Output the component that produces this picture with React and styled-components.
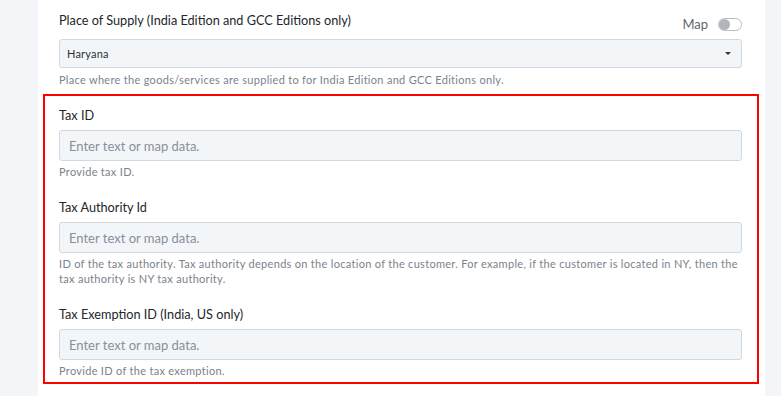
import React from 'react';
import styled, { createGlobalStyle } from 'styled-components';

const GlobalStyle = createGlobalStyle`
	html, body {
		margin: 0;
		padding: 0;
		background: #f3f5f8;
		font-family: Lato, 'Open Sans', sans-serif;
	}
`;

const Page = styled.div`
	display: flex;
	height: 396px;
	overflow: hidden;
`;

const Gutter = styled.div`
	width: ${(p) => p.width}px;
	flex-shrink: 0;
	background: #f3f5f8;
`;

const Panel = styled.div`
	flex: 1;
	background: #ffffff;
	padding: 0 6px 0 5px;
`;

const Section = styled.div`
	padding: ${(p) => (p.highlight ? '10px 15px 4px 14px' : '11px 17px 7px 16px')};
	border: ${(p) => (p.highlight ? '2px solid #ff0000' : 'none')};
`;

const Field = styled.div`
	display: flex;
	flex-direction: column;
	margin-bottom: ${(p) => (p.last ? 0 : 19)}px;
`;

const LabelRow = styled.div`
	display: flex;
	align-items: center;
	justify-content: space-between;
	height: 18px;
`;

const Label = styled.label`
	font-size: 12.7px;
	line-height: 18px;
	color: #22262b;
`;

const MapToggle = styled.div`
	display: flex;
	align-items: center;
	gap: 10px;
	font-size: 13px;
	color: #5f6670;
	margin-top: 8px;
`;

const Switch = styled.span`
	position: relative;
	width: 22px;
	height: 11px;
	border: 1px solid #b9bec5;
	border-radius: 7px;
	background: #ffffff;

	&::after {
		content: '';
		position: absolute;
		left: 0;
		top: 0;
		width: 11px;
		height: 11px;
		border-radius: 50%;
		background: #b1b6bd;
	}
`;

const Input = styled.input`
	box-sizing: border-box;
	width: 100%;
	height: ${(p) => (p.tall ? 29 : 31)}px;
	margin-top: ${(p) => (p.tall ? 10 : 6)}px;
	padding: 0 9px;
	font-family: Lato, 'Open Sans', sans-serif;
	font-size: 13px;
	color: #333a42;
	background: #f3f6f9;
	border: 1px solid #d3d8de;
	border-radius: 3px;
	outline: none;

	&::placeholder {
		color: #88909a;
	}
`;

const Select = styled.div`
	box-sizing: border-box;
	display: flex;
	align-items: center;
	justify-content: space-between;
	height: 29px;
	margin-top: 10px;
	padding: 0 10px 0 7px;
	font-size: 11px;
	letter-spacing: 0.2px;
	color: #2b3036;
	background: #f3f6f9;
	border: 1px solid #d3d8de;
	border-radius: 3px;
`;

const Caret = styled.span`
	width: 0;
	height: 0;
	border-left: 3px solid transparent;
	border-right: 3px solid transparent;
	border-top: 3px solid #333;
`;

const Hint = styled.p`
	margin: ${(p) => p.gap || 3}px 0 0;
	font-size: 11px;
	line-height: 15px;
	letter-spacing: 0.3px;
	color: #7b828b;
`;

const fields = [
	{ label: 'Tax ID', hint: 'Provide tax ID.' },
	{
		label: 'Tax Authority Id',
		hint:
			'ID of the tax authority. Tax authority depends on the location of the customer. For example, if the customer is located in NY, then the tax authority is NY tax authority.',
	},
	{ label: 'Tax Exemption ID (India, US only)', hint: 'Provide ID of the tax exemption.' },
];

const App = () => {
	return (
		<>
			<GlobalStyle />
			<Page>
				<Gutter width={38} />
				<Panel>
					<Section>
						<Field last>
							<LabelRow>
								<Label>Place of Supply (India Edition and GCC Editions only)</Label>
								<MapToggle>
									Map
									<Switch />
								</MapToggle>
							</LabelRow>
							<Select>
								Haryana
								<Caret />
							</Select>
							<Hint gap={4}>
								Place where the goods/services are supplied to for India Edition and GCC
								Editions only.
							</Hint>
						</Field>
					</Section>
					<Section highlight>
						{fields.map((f, i) => (
							<Field key={f.label} last={i === fields.length - 1}>
								<Label>{f.label}</Label>
								<Input placeholder="Enter text or map data." />
								<Hint>{f.hint}</Hint>
							</Field>
						))}
					</Section>
				</Panel>
				<Gutter width={16} />
			</Page>
		</>
	);
};

export default App;
